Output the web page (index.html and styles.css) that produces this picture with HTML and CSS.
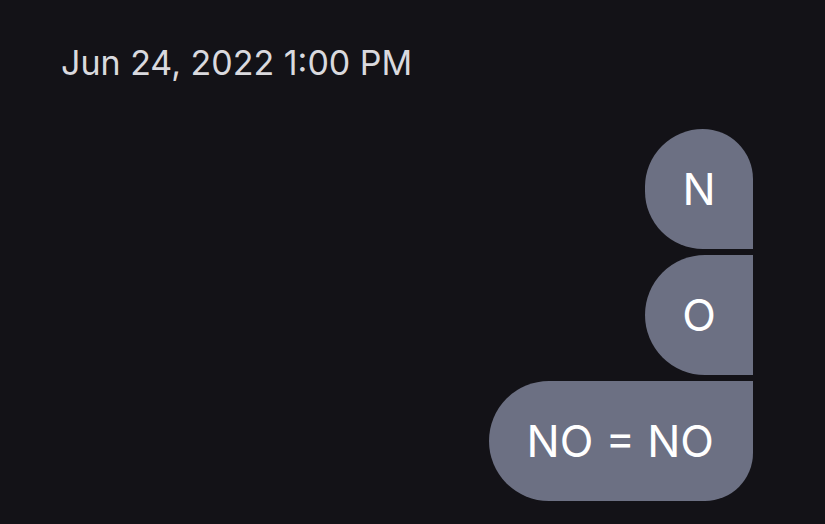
FILE: index.html
```html
<!DOCTYPE html>
<html>
<head>
<meta charset="utf-8">
<link rel="stylesheet" href="styles.css">
</head>
<body>
<div class="page">
  <div class="date">Jun 24, 2022 1:00 PM</div>
  <div class="thread">
    <div class="bubble single first">N</div>
    <div class="bubble single middle">O</div>
    <div class="bubble last">NO = NO</div>
  </div>
</div>
</body>
</html>
```

FILE: styles.css
```css
html, body {
  margin: 0;
  padding: 0;
  background: #131217;
}
.page {
  width: 825px;
  height: 524px;
  box-sizing: border-box;
  padding: 42px 72px 0 61px;
  font-family: Inter, "Noto Sans", sans-serif;
}
.date {
  font-size: 34px;
  line-height: 42px;
  color: #d9d9de;
}
.thread {
  margin-top: 45px;
  display: flex;
  flex-direction: column;
  align-items: flex-end;
  gap: 6px;
}
.bubble {
  height: 120px;
  box-sizing: border-box;
  padding: 0 39px 0 38px;
  display: flex;
  align-items: center;
  justify-content: center;
  background: #6c7083;
  color: #ffffff;
  font-size: 44px;
}
.single {
  width: 108px;
  padding: 0;
}
.first {
  border-radius: 60px 52px 0 60px;
}
.middle {
  border-radius: 60px 0 0 60px;
}
.last {
  border-radius: 60px 0 48px 60px;
}
```
